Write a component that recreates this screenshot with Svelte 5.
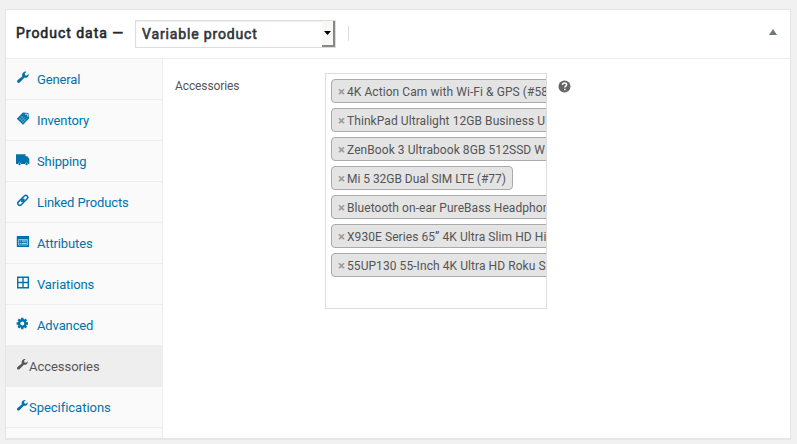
<script>
  const tabs = [
    { label: 'General', icon: 'wrench' },
    { label: 'Inventory', icon: 'tag' },
    { label: 'Shipping', icon: 'truck' },
    { label: 'Linked Products', icon: 'link' },
    { label: 'Attributes', icon: 'list' },
    { label: 'Variations', icon: 'grid' },
    { label: 'Advanced', icon: 'gear' },
    { label: 'Accessories', icon: 'wrench', tight: true, active: true },
    { label: 'Specifications', icon: 'wrench', tight: true }
  ];
  const products = [
    { name: '4K Action Cam with Wi-Fi & GPS (#58)' },
    { name: 'ThinkPad Ultralight 12GB Business Ultrabook' },
    { name: 'ZenBook 3 Ultrabook 8GB 512SSD W10' },
    { name: 'Mi 5 32GB Dual SIM LTE (#77)', snug: true },
    { name: 'Bluetooth on-ear PureBass Headphones' },
    { name: 'X930E Series 65” 4K Ultra Slim HD High' },
    { name: '55UP130 55-Inch 4K Ultra HD Roku Smart' }
  ];
</script>

<div class="page">
  <section class="panel">
    <header>
      <h2>Product data —</h2>
      <div class="select">
        <span>Variable product</span>
        <i class="drop"><svg width="7" height="4" viewBox="0 0 7 4"><path d="M0 0h7L3.5 4z" fill="#000" /></svg></i>
      </div>
      <i class="divider"></i>
      <svg class="toggle" width="8" height="6" viewBox="0 0 8 6"><path d="M4 0l4 6H0z" fill="#72777c" /></svg>
    </header>
    <div class="body">
      <nav>
        {#each tabs as tab}
          <a class:tight={tab.tight} class:active={tab.active}>
            <svg class="icon" width="14" height="14" viewBox="0 0 14 14" fill="currentColor">
              {#if tab.icon === 'wrench'}
                <path d="M10.300.7 8.700 2.500l.4 1.700 1.700.4 1.700-1.700c.3 1.500-.2 2.700-1.100 3.300-.9.700-2 .7-2.900.4L4 11.300c-.7.7-1.800.8-2.500.2-.6-.7-.6-1.700.2-2.400l4.500-3.700C5.900 4 6.100 2.700 7 1.700c.9-.9 2-1.300 3.300-1z" />
              {:else if tab.icon === 'tag'}
                <path d="M.8 6.700 6.900.5l5.500.6.6 5.400-6 6.300z" />
                <path d="M3.200 5.700l4.600 4.700M4.800 4.200l4.600 4.700M3.300 8l4.400-4.400M4.800 9.500l4.700-4.700M6.300 10.900l4.500-4.700" stroke="#8fc4dd" stroke-width=".55" />
                <path d="M9 2.100h2.400v2.400" fill="none" stroke="#d9edf5" stroke-width=".9" />
              {:else if tab.icon === 'truck'}
                <path d="M0 1.300h9.500v2h1.800l2 2.400V11h-1.200a1.600 1.600 0 0 0-3.100 0H5.100A1.600 1.600 0 0 0 2 11H0z" />
                <circle cx="3.500" cy="11.200" r="1.100" /><circle cx="10.600" cy="11.200" r="1.100" />
              {:else if tab.icon === 'link'}
                <g fill="none" stroke="currentColor" stroke-width="1.500" transform="rotate(-45 6.800 6.300)">
                  <rect x=".6" y="4.300" width="6.800" height="4" rx="2" />
                  <rect x="6.200" y="4.300" width="6.800" height="4" rx="2" />
                  <path d="M4.500 6.300h4.600" />
                </g>
              {:else if tab.icon === 'list'}
                <path d="M.8 1h12.200v11H.8z" />
                <path d="M2.500 4.500h9v5.500h-9z" fill="none" stroke="#b9dceb" stroke-width=".7" />
                <path d="M3.700 6h1.100M3.700 8.400h1.100M5.700 6h5M5.700 8.400h5" stroke="#e5f3f9" stroke-width=".9" />
              {:else if tab.icon === 'grid'}
                <path d="M1 .6h12v11.800H1zM2.400 2v3.800h3.900V2zM7.700 2v3.800h3.900V2zM2.400 7.200V11h3.900V7.200zM7.700 7.200V11h3.900V7.200z" fill-rule="evenodd" />
              {:else}
                <g transform="translate(6.300 6.500)">
                  <circle r="3.200" fill="none" stroke="currentColor" stroke-width="2.400" />
                  {#each [0, 45, 90, 135] as angle}
                    <path d="M-1.200-5.700h2.400v2.400h-2.400zM-1.200 3.300h2.400v2.400h-2.400z" transform="rotate({angle})" />
                  {/each}
                </g>
              {/if}
            </svg>
            <span>{tab.label}</span>
          </a>
        {/each}
      </nav>
      <div class="content">
        <label for="accessories">Accessories</label>
        <ul id="accessories">
          {#each products as product}
            <li class:snug={product.snug}><b>×</b><span>{product.name}</span></li>
          {/each}
        </ul>
        <svg class="help" width="13" height="13" viewBox="0 0 13 13">
          <circle cx="6.500" cy="6.500" r="6" fill="#666" />
          <path d="M4.500 4.900C4.600 3.500 5.500 3 6.600 3c1.200 0 2 .7 2 1.700 0 1.400-1.800 1.400-1.800 2.900" fill="none" stroke="#fff" stroke-width="1.500" />
          <path d="M6 8.700h1.600v1.500H6z" fill="#fff" />
        </svg>
      </div>
    </div>
  </section>
</div>

<style>
  :global(body) { background: #f1f1f1; overflow: hidden; }
  .page {
    box-sizing: border-box;
    width: 797px;
    height: 444px;
    padding: 9px 6px 5px 5px;
    background: #f1f1f1;
    color: #555;
    font: 13px/18px Roboto, sans-serif;
  }
  .panel {
    box-sizing: border-box;
    height: 430px;
    display: flex;
    flex-direction: column;
    border: 1px solid #e5e5e5;
    background: #fff;
    box-shadow: 0 1px 1px rgba(0, 0, 0, .04);
  }
  header {
    box-sizing: border-box;
    height: 49px;
    flex: none;
    display: flex;
    align-items: flex-start;
    padding: 10px 13px 0 10px;
    border-bottom: 1px solid #eee;
    color: #23282d;
  }
  h2 {
    width: 119px;
    margin: 3px 0 0;
    font-size: 14px;
    line-height: 20px;
    font-weight: 400;
    letter-spacing: .97px;
    -webkit-text-stroke: .6px currentColor;
    white-space: nowrap;
  }
  .select {
    box-sizing: border-box;
    width: 201px;
    height: 28px;
    display: flex;
    justify-content: space-between;
    border: 1px solid #ddd;
    box-shadow: inset 0 1px 2px rgba(0, 0, 0, .07);
    font-size: 14px;
    line-height: 26px;
    font-weight: 400;
    letter-spacing: .85px;
    -webkit-text-stroke: .6px currentColor;
    color: #32373c;
  }
  .select span { padding-left: 6px; white-space: nowrap; }
  .drop {
    box-sizing: border-box;
    width: 13px;
    height: 26px;
    display: flex;
    align-items: center;
    justify-content: center;
    background: #f8f8f7;
    border: solid #888;
    border-width: 0 2px 2px 0;
  }
  .divider { width: 1px; height: 15px; margin: 6px 0 0 12px; background: #ddd; }
  .toggle { margin: 9px 0 0 auto; }
  .body { flex: 1; min-height: 0; display: flex; }
  nav {
    box-sizing: border-box;
    width: 157px;
    flex: none;
    border-right: 1px solid #eee;
    background: #fafafa;
  }
  nav a {
    box-sizing: border-box;
    height: 41px;
    display: flex;
    align-items: flex-start;
    gap: 7px;
    padding: 12px 0 0 10px;
    border-bottom: 1px solid #eee;
    color: #0073aa;
    letter-spacing: -.12px;
  }
  nav a.tight { gap: 0; letter-spacing: -.03px; }
  nav a.tight .icon { width: 13px; }
  nav a.active { background: #eee; color: #555; }
  .icon { flex: none; }
  nav span { white-space: nowrap; }
  .content { flex: 1; display: flex; align-items: flex-start; padding: 14px 0 0 12px; }
  label { width: 150px; padding-top: 4px; font-size: 12px; letter-spacing: -.1px; }
  ul {
    box-sizing: border-box;
    width: 222px;
    height: 236px;
    margin: 0;
    padding: 5px;
    border: 1px solid #ddd;
    overflow: hidden;
    list-style: none;
  }
  li {
    box-sizing: border-box;
    width: max-content;
    height: 24px;
    margin-bottom: 5px;
    padding: 0 6px 0 6px;
    display: flex;
    border: 1px solid #aaa;
    border-radius: 4px;
    background: #e4e4e4;
    font-size: 12px;
    line-height: 24px;
    letter-spacing: .07px;
    white-space: nowrap;
  }
  li.snug { letter-spacing: -.04px; }
  li b { width: 9px; font-size: 13px; color: #999; }
  .help { margin: 7px 0 0 11px; }
</style>
